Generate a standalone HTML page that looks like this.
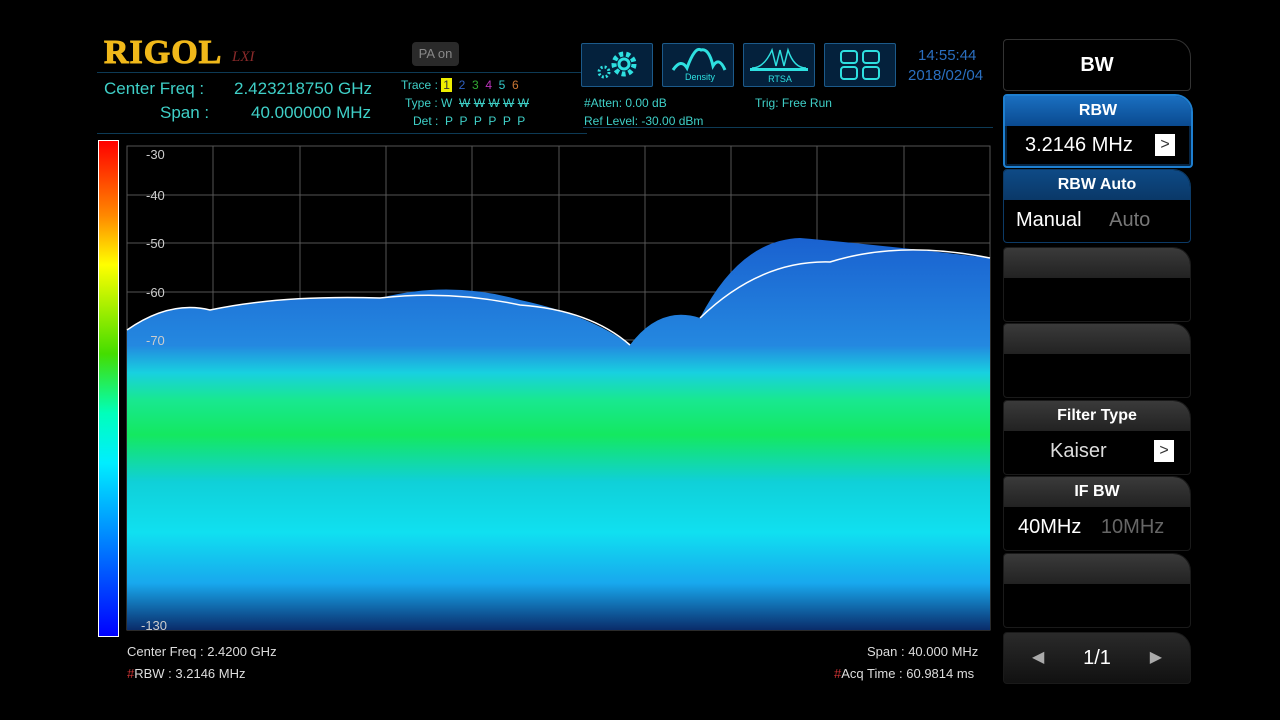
<!DOCTYPE html>
<html><head><meta charset="utf-8"><style>
body{margin:0;width:1280px;height:720px;background:#000;overflow:hidden;font-family:"Liberation Sans",sans-serif;position:relative}
.a{position:absolute;white-space:nowrap}
.c{color:#3fd0c8}
.btn{position:absolute;left:1003px;width:186px;border-radius:4px 18px 4px 4px;overflow:hidden;background:#000;border:1px solid #1a1a1a}
.btn .t{height:30px;background:linear-gradient(#3a3a3a,#222);color:#fff;font-weight:bold;font-size:16px;text-align:center;line-height:30px}
.ic{position:absolute;top:43px;height:42px;width:70px;border:1px solid #1c5a8a;background:#04213c;border-radius:2px}
</style></head><body>
<div class="a" style="left:104px;top:34px;font-family:'Liberation Serif',serif;font-weight:900;font-size:34px;letter-spacing:1px;color:#f0b81a;-webkit-text-stroke:1px #f0b81a">RIGOL</div>
<div class="a" style="left:232px;top:49px;font:italic 15px 'Liberation Serif',serif;color:#8a2a2a">LXI</div>
<div class="a" style="left:412px;top:42px;width:47px;height:24px;background:#2a2a2a;border-radius:4px;color:#888;font-size:13px;line-height:24px;text-align:center">PA on</div>
<div class="a" style="left:97px;top:72px;width:490px;height:60px;border-top:1px solid #0d3a55;border-bottom:1px solid #0d3a55"></div>
<div class="a c" style="left:104px;top:79px;font-size:17px">Center Freq :</div>
<div class="a c" style="left:160px;top:103px;font-size:17px">Span :</div>
<div class="a c" style="left:234px;top:79px;font-size:17px">2.423218750 GHz</div>
<div class="a c" style="left:251px;top:103px;font-size:17px">40.000000 MHz</div>
<div class="a c" style="left:401px;top:78px;font-size:12px">Trace : <span style="background:#ee0;color:#333;padding:0 2px">1</span>&nbsp; <span style="color:#3060c0">2</span>&nbsp; <span style="color:#3a3">3</span>&nbsp; <span style="color:#b3b">4</span>&nbsp; <span style="color:#3cc">5</span>&nbsp; <span style="color:#c73">6</span></div>
<div class="a c" style="left:405px;top:96px;font-size:12px">Type : W &nbsp;<s>W</s> <s>W</s> <s>W</s> <s>W</s> <s>W</s></div>
<div class="a c" style="left:413px;top:114px;font-size:12px">Det : &nbsp;P &nbsp;P &nbsp;P &nbsp;P &nbsp;P &nbsp;P</div>
<div class="a" style="left:583px;top:127px;width:410px;border-top:1px solid #0d3a55"></div>
<div class="a c" style="left:584px;top:96px;font-size:12px">#Atten: 0.00 dB</div>
<div class="a c" style="left:584px;top:114px;font-size:12px">Ref Level: -30.00 dBm</div>
<div class="a c" style="left:755px;top:96px;font-size:12px">Trig: Free Run</div>
<div class="ic" style="left:581px"><svg width="70" height="42"><circle cx="42" cy="20" r="10" fill="none" stroke="#2ee0e0" stroke-width="5" stroke-dasharray="4 3"/><circle cx="42" cy="20" r="5" fill="none" stroke="#2ee0e0" stroke-width="3"/><circle cx="22" cy="28" r="5" fill="none" stroke="#2ee0e0" stroke-width="3" stroke-dasharray="2 2"/></svg></div>
<div class="ic" style="left:662px"><svg width="70" height="42"><path d="M10 26 Q18 14 24 24 Q32 2 38 6 Q46 4 50 22 Q56 12 62 26" fill="none" stroke="#2ee0e0" stroke-width="3"/><text x="37" y="36" font-size="9" fill="#2ee0e0" text-anchor="middle" font-family="Liberation Sans">Density</text></svg></div>
<div class="ic" style="left:743px"><svg width="70" height="42"><path d="M8 24 Q20 24 28 6 L32 22 L36 6 L40 22 L44 6 Q50 24 62 24" fill="none" stroke="#2ee0e0" stroke-width="1.5"/><rect x="6" y="24" width="58" height="3" fill="#2ee0e0"/><text x="36" y="38" font-size="9" fill="#2ee0e0" text-anchor="middle" font-family="Liberation Sans">RTSA</text></svg></div>
<div class="ic" style="left:824px"><svg width="70" height="42"><g fill="none" stroke="#2ee0e0" stroke-width="2"><rect x="16" y="7" width="16" height="12" rx="3"/><rect x="38" y="7" width="16" height="12" rx="3"/><rect x="16" y="23" width="16" height="12" rx="3"/><rect x="38" y="23" width="16" height="12" rx="3"/></g></svg></div>
<div class="a" style="left:918px;top:47px;font-size:15px;color:#2a6fc0">14:55:44</div>
<div class="a" style="left:908px;top:67px;font-size:15px;color:#2a6fc0">2018/02/04</div>
<div class="a" style="left:98px;top:140px;width:21px;height:497px;background:linear-gradient(#f00,#f80 15%,#ff0 25%,#4d0 43%,#0fb 55%,#0ef 65%,#08f 80%,#00f);border:1px solid #fff;box-sizing:border-box"></div>
<svg class="a" style="left:0;top:0" width="1280" height="720">
<defs><linearGradient id="g" x1="0" y1="240" x2="0" y2="630" gradientUnits="userSpaceOnUse">
<stop offset="0" stop-color="#1a62d0"/><stop offset="0.27" stop-color="#2488e0"/><stop offset="0.34" stop-color="#18d0e0"/><stop offset="0.41" stop-color="#18e890"/><stop offset="0.5" stop-color="#14e860"/><stop offset="0.62" stop-color="#10d0d8"/><stop offset="0.75" stop-color="#10e0f0"/><stop offset="0.88" stop-color="#18a8ee"/><stop offset="1" stop-color="#0a2c6a"/></linearGradient></defs>
<rect x="127" y="146" width="863" height="484" fill="none" stroke="#555"/>
<g stroke="#555" stroke-width="1">
<path d="M213 146V630M300 146V630M386 146V630M472 146V630M559 146V630M645 146V630M731 146V630M817 146V630M904 146V630"/>
<path d="M127 195H990M127 243H990M127 292H990M127 340H990M127 388H990M127 437H990M127 485H990M127 533H990M127 582H990"/></g>
<path d="M127 330 Q170 300 210 310 Q280 295 380 298 Q450 280 520 300 Q590 315 630 345 Q660 305 700 318 Q740 240 800 238 Q880 245 990 258 L990 630 L127 630Z" fill="url(#g)"/>
<path d="M127 330 Q170 300 210 310 Q280 295 380 298 Q450 290 520 305 Q590 310 630 345 M700 318 Q760 260 830 262 Q900 240 990 258" fill="none" stroke="#fff" stroke-width="1.5"/>
<g fill="#ccc" font-size="13" font-family="Liberation Sans"><text x="146" y="159">-30</text><text x="146" y="200">-40</text><text x="146" y="248">-50</text><text x="146" y="297">-60</text><text x="146" y="345">-70</text><text x="141" y="630">-130</text></g>
</svg>
<div class="a" style="left:127px;top:644px;font-size:13px;color:#ddd">Center Freq : 2.4200 GHz</div>
<div class="a" style="left:127px;top:666px;font-size:13px;color:#ddd"><span style="color:#c33">#</span>RBW : 3.2146 MHz</div>
<div class="a" style="left:867px;top:644px;font-size:13px;color:#ddd">Span : 40.000 MHz</div>
<div class="a" style="left:834px;top:666px;font-size:13px;color:#ddd"><span style="color:#c33">#</span>Acq Time : 60.9814 ms</div>
<div class="btn" style="top:39px;height:50px;border-color:#333"><div style="color:#fff;font-weight:bold;font-size:20px;text-align:center;line-height:50px">BW</div></div>
<div class="btn" style="top:94px;height:70px;border:2px solid #1e7fd0;background:#062544"><div class="t" style="background:linear-gradient(#1a6fc0,#0a4a90)">RBW</div><div style="color:#fff;font-size:20px;line-height:38px;padding-left:18px;background:#000;margin:0 2px">3.2146 MHz<span style="position:absolute;right:16px;top:38px;width:20px;height:22px;background:#fff;color:#333;font-size:16px;line-height:22px;text-align:center">&gt;</span></div></div>
<div class="btn" style="top:169px;height:72px;border-color:#0c3a66"><div class="t" style="background:linear-gradient(#0e4a86,#0a3868)">RBW Auto</div><div style="color:#fff;font-size:20px;line-height:40px;padding-left:12px">Manual <span style="color:#777;margin-left:22px">Auto</span></div></div>
<div class="btn" style="top:247px;height:73px"><div class="t"></div></div>
<div class="btn" style="top:323px;height:73px"><div class="t"></div></div>
<div class="btn" style="top:400px;height:73px"><div class="t">Filter Type</div><div style="color:#ddd;font-size:20px;line-height:40px;padding-left:46px">Kaiser<span style="position:absolute;right:16px;top:39px;width:20px;height:22px;background:#fff;color:#333;font-size:16px;line-height:22px;text-align:center">&gt;</span></div></div>
<div class="btn" style="top:476px;height:73px"><div class="t">IF BW</div><div style="color:#fff;font-size:20px;line-height:40px;padding-left:14px">40MHz <span style="color:#666;margin-left:14px">10MHz</span></div></div>
<div class="btn" style="top:553px;height:73px"><div class="t"></div></div>
<div class="btn" style="top:632px;height:50px;background:linear-gradient(#2a2a2a,#111)"><div style="color:#fff;font-size:20px;text-align:center;line-height:50px"><span style="color:#aaa;font-size:16px;float:left;margin-left:28px">◀</span>1/1<span style="color:#aaa;font-size:16px;float:right;margin-right:28px">▶</span></div></div>
</body></html>
